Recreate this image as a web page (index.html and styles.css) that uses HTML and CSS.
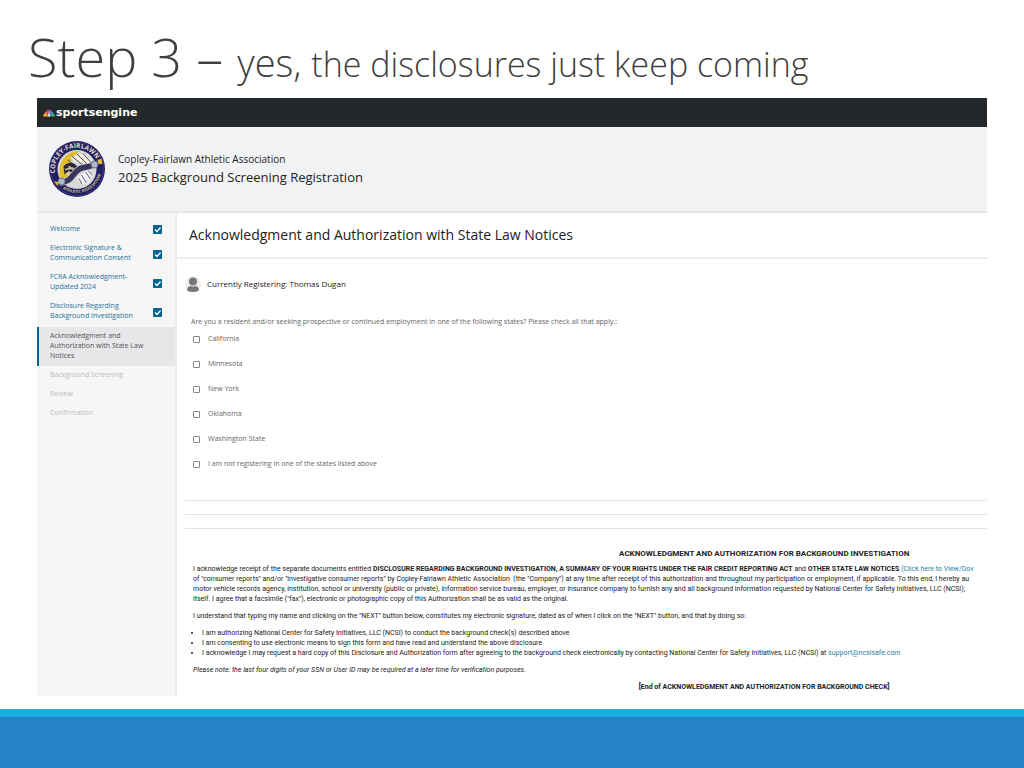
FILE: index.html
```html
<!DOCTYPE html>
<html lang="en">
<head>
	<meta charset="utf-8" />
	<meta name="viewport" content="width=device-width,initial-scale=1" />
	<title>Step 3 - yes, the disclosures just keep coming</title>
	<link rel="stylesheet" href="styles.css">
</head>
<body>
	<div class="slide">
		<h1 class="slide_title">Step 3 – <span class="mid">yes, </span><span class="small">the disclosures just keep coming</span></h1>

		<div class="screen">
			<div class="topbar">
				<svg class="peacock" viewBox="0 0 24 16">
					<path d="M11 15 L1 15 Q-1 11 4 9 Z" fill="#f5b335"/>
					<path d="M11 15 L3 9 Q3 4 8 5 Z" fill="#ef7b3a"/>
					<path d="M11 15 L7 5 Q8 0 12 2 Z" fill="#d9415c"/>
					<path d="M13 15 L12 2 Q16 0 17 5 Z" fill="#8a6cc0"/>
					<path d="M13 15 L16 5 Q21 4 21 9 Z" fill="#3a8fd0"/>
					<path d="M13 15 L20 9 Q25 11 23 15 Z" fill="#3fb56b"/>
					<path d="M12 4 L10 15 H14 Z" fill="#fff"/>
				</svg>
				<span class="brand">sportsengine</span>
			</div>

			<div class="header">
				<svg class="badge" viewBox="0 0 112 112">
					<defs>
						<path id="arcTop" d="M22 86 A44 44 0 1 1 98 70"/>
						<path id="arcBottom" d="M22 91 A50 50 0 0 0 105 60"/>
					</defs>
					<circle cx="56" cy="56" r="56" fill="#241f62"/>
					<circle cx="56" cy="56" r="53" fill="none" stroke="#3c3778" stroke-width="2"/>
					<circle cx="56" cy="57" r="39" fill="#d8d9d4"/>
					<path d="M22 72 C16 42 36 18 62 20 C50 28 44 36 42 48 L34 80 Z" fill="#e2bd29"/>
					<path d="M42 32 L70 25 L90 44 L72 48 L52 42 Z" fill="#f3f0e2"/>
					<path d="M45 30 L66 47 M56 26 L76 46 M68 25 L84 43 M38 38 L57 53" stroke="#4a4656" stroke-width="2"/>
					<path d="M29 51 Q40 38 54 48 L61 58 L48 66 L40 60 L31 67 Z" fill="#2b2939"/>
					<path d="M32 57 L49 54 M39 51 L55 60 M35 64 L47 66" stroke="#d5c89e" stroke-width="3"/>
					<path d="M56 73 L77 58 L89 67 L79 85 L64 88 Z" fill="#eeeff0"/>
					<path d="M65 68 L75 84 M73 62 L83 76 M60 75 L66 87 M79 60 L87 69" stroke="#66627d" stroke-width="2"/>
					<path d="M22 82 C48 84 48 58 66 54 S84 52 91 46" stroke="#c4c6d0" stroke-width="14" fill="none"/>
					<path d="M22 82 C48 84 48 58 66 54 S84 52 91 46" stroke="#38365c" stroke-width="11" fill="none"/>
					<circle cx="91" cy="47" r="7" fill="#aeb8c8" stroke="#666b88" stroke-width="2"/>
					<circle cx="25" cy="81" r="7" fill="#aeb8c8" stroke="#666b88" stroke-width="2"/>
					<path d="M97 38 L105 35 L107 46 L99 46 Z M10 81 L20 82 L17 90 Z" fill="#e2bd29"/>
					<text class="badge_name"><textPath href="#arcTop" startOffset="47%">COPLEY-FAIRLAWN</textPath></text>
					<text class="badge_assoc"><textPath href="#arcBottom" startOffset="50%">ATHLETIC ASSOCIATION</textPath></text>
				</svg>
				<div class="header_text">
					<p class="org">Copley-Fairlawn Athletic Association</p>
					<h2 class="reg">2025 Background Screening Registration</h2>
				</div>
			</div>

			<div class="columns">
				<ul class="steps">
					<li class="done"><label for="s1">Welcome</label><input type="checkbox" id="s1" checked></li>
					<li class="done"><label for="s2">Electronic Signature &amp;<br>Communication Consent</label><input type="checkbox" id="s2" checked></li>
					<li class="done"><label for="s3">FCRA Acknowledgment-<br>Updated 2024</label><input type="checkbox" id="s3" checked></li>
					<li class="done"><label for="s4">Disclosure Regarding<br>Background Investigation</label><input type="checkbox" id="s4" checked></li>
					<li class="current">Acknowledgment and<br>Authorization with State Law<br>Notices</li>
					<li class="todo">Background Screening</li>
					<li class="todo">Review</li>
					<li class="todo">Confirmation</li>
				</ul>

				<div class="main">
					<h2 class="page_title">Acknowledgment and Authorization with State Law Notices</h2>

					<div class="person">
						<svg class="avatar" viewBox="0 0 32 32">
							<circle cx="16" cy="16" r="16" fill="#eee"/>
							<circle cx="16" cy="11" r="8" fill="#777"/>
							<path d="M4 29 Q4 20 12 20 Q16 23 20 20 Q28 20 28 29 Q22 32 16 32 Q10 32 4 29 Z" fill="#777"/>
						</svg>
						<span>Currently Registering: Thomas Dugan</span>
					</div>

					<fieldset class="states">
						<legend>Are you a resident and/or seeking prospective or continued employment in one of the following states? Please check all that apply.:</legend>
						<label><input type="checkbox">California</label>
						<label><input type="checkbox">Minnesota</label>
						<label><input type="checkbox">New York</label>
						<label><input type="checkbox">Oklahoma</label>
						<label><input type="checkbox">Washington State</label>
						<label><input type="checkbox">I am not registering in one of the states listed above</label>
					</fieldset>

					<div class="rules">
						<hr>
						<hr>
						<hr>
					</div>

					<div class="notice">
						<h3>ACKNOWLEDGMENT AND AUTHORIZATION FOR BACKGROUND INVESTIGATION</h3>
						<p>I acknowledge receipt of the separate documents entitled <b>DISCLOSURE REGARDING BACKGROUND INVESTIGATION, A SUMMARY OF YOUR RIGHTS UNDER THE FAIR CREDIT REPORTING ACT</b> and <b>OTHER STATE LAW NOTICES</b> <a href="#">(Click here to View/Dov</a><br>
						of "consumer reports" and/or "investigative consumer reports" by Copley-Fairlawn Athletic Association &nbsp;(the "Company") at any time after receipt of this authorization and throughout my participation or employment, if applicable. To this end, I hereby au<br>
						motor vehicle records agency, institution, school or university (public or private), information service bureau, employer, or insurance company to furnish any and all background information requested by National Center for Safety Initiatives, LLC (NCSI);<br>
						itself. I agree that a facsimile ("fax"), electronic or photographic copy of this Authorization shall be as valid as the original.</p>
						<p>I understand that typing my name and clicking on the "NEXT" button below, constitutes my electronic signature, dated as of when I click on the "NEXT" button, and that by doing so:</p>
						<ul>
							<li>I am authorizing National Center for Safety Initiatives, LLC (NCSI) to conduct the background check(s) described above</li>
							<li>I am consenting to use electronic means to sign this form and have read and understand the above disclosure</li>
							<li>I acknowledge I may request a hard copy of this Disclosure and Authorization form after agreeing to the background check electronically by contacting National Center for Safety Initiatives, LLC (NCSI) at <a href="#">support@ncsisafe.com</a></li>
						</ul>
						<p><i>Please note: the last four digits of your SSN or User ID may be required at a later time for verification purposes.</i></p>
						<h4>[End of ACKNOWLEDGMENT AND AUTHORIZATION FOR BACKGROUND CHECK]</h4>
					</div>
				</div>
			</div>
		</div>

		<div class="slide_footer"></div>
	</div>
</body>
</html>
```
FILE: styles.css
```css
*{
	box-sizing: border-box;
}
body,h1,h2,h3,h4,p,ul,fieldset,legend{
	margin: 0;
	padding: 0;
	border: 0;
}
body{
	background-color: #fff;
	font-family: "Open Sans","Liberation Sans",sans-serif;
	color: #222;
}
a{
	color: #2a7fa5;
	text-decoration: none;
}
.slide{
	min-height: 100vh;
	display: flex;
	flex-direction: column;
}
.slide_title{
	padding: 16px 28px 0;
	height: 98px;
	font-size: 54px;
	font-weight: 300;
	line-height: 80px;
	color: #404040;
	white-space: nowrap;
}
.slide_title .mid{
	font-size: 38px;
}
.slide_title .small{
	font-size: 34px;
}
.screen{
	flex: 1;
	display: flex;
	flex-direction: column;
	margin: 0 37px 13px;
	overflow: hidden;
}

/* site header */
.topbar{
	display: flex;
	align-items: center;
	gap: 1px;
	height: 29px;
	padding: 0 6px;
	background-color: #23282b;
}
.peacock{
	width: 12px;
	height: 8px;
}
.brand{
	font-family: "DejaVu Sans",sans-serif;
	font-size: 11px;
	font-weight: 700;
	line-height: 16px;
	color: #fff;
}
.header{
	display: flex;
	align-items: center;
	gap: 13px;
	height: 86px;
	padding: 0 12px 1px;
	background-color: #f1f2f4;
	border-bottom: 2px solid #e6e7e9;
}
.badge{
	width: 56px;
	height: 56px;
}
.badge text{
	font-weight: 700;
	text-anchor: middle;
}
.badge .badge_name{
	font-size: 13px;
	fill: #e4dfc4;
}
.badge .badge_assoc{
	font-size: 8px;
	fill: #cfc48c;
}
.org{
	font-size: 10px;
	line-height: 16px;
}
.reg{
	font-size: 13px;
	font-weight: 400;
	line-height: 20px;
}

/* left steps */
.columns{
	flex: 1;
	display: flex;
}
.steps{
	width: 140px;
	flex: none;
	padding-top: 6px;
	background-color: #f6f6f7;
	border-right: 2px solid #ececee;
	list-style: none;
	font-size: 7px;
	line-height: 10px;
}
.steps li{
	display: flex;
	align-items: center;
	justify-content: space-between;
	padding: 4px 13px 5px 13px;
}
.steps input{
	appearance: none;
	width: 9px;
	height: 9px;
	margin: 2px 0 0;
	border-radius: 1px;
	background: #05648f url("data:image/svg+xml,%3Csvg xmlns='http://www.w3.org/2000/svg' viewBox='0 0 9 9'%3E%3Cpath d='M2 4.5L4 6.5L7.5 2.5' fill='none' stroke='white' stroke-width='1.3'/%3E%3C/svg%3E");
}
.steps .done{
	color: #1c7299;
}
.steps .current{
	margin-top: 1px;
	background-color: #e7e7ea;
	border-left: 2px solid #05648f;
	padding-left: 11px;
	color: #555;
}
.steps .todo{
	color: #bbb;
}

/* content */
.main{
	flex: 1;
	min-width: 0;
	overflow: hidden;
}
.page_title{
	padding: 12px 12px;
	border-bottom: 2px solid #eee;
	font-size: 14px;
	font-weight: 400;
	line-height: 20px;
}
.person{
	display: flex;
	align-items: center;
	gap: 6px;
	padding: 17px 8px 25px;
	font-size: 8px;
	line-height: 16px;
}
.avatar{
	width: 16px;
	height: 16px;
}
.states{
	display: grid;
	row-gap: 15px;
	padding-left: 14px;
	font-size: 7px;
	line-height: 10px;
	color: #666;
}
.states legend{
	margin-bottom: 7px;
}
.states label{
	display: flex;
	align-items: center;
	gap: 8px;
}
.states input{
	appearance: none;
	width: 7px;
	height: 7px;
	margin: 0 0 0 2px;
	border: 1px solid #888;
	border-radius: 1px;
}
.rules{
	padding: 31px 0 7px 8px;
}
.rules hr{
	margin: 0 0 13px;
	border: 0;
	border-top: 1px solid #e4e4e4;
}
.notice{
	width: 144%;
	padding: 0 8px 0 16px;
	font-family: Roboto,"Open Sans",sans-serif;
	font-size: 7px;
	line-height: 10px;
	white-space: nowrap;
}
.notice h3{
	margin-bottom: 5px;
	font-size: 8px;
	text-align: center;
}
.notice p{
	margin-bottom: 7px;
}
.notice ul{
	margin-bottom: 7px;
	padding-left: 9px;
}
.notice h4{
	font-size: 7px;
	text-align: center;
}

.slide_footer{
	height: 59px;
	background-color: #2683c6;
	border-top: 8px solid #1cade4;
}
```
